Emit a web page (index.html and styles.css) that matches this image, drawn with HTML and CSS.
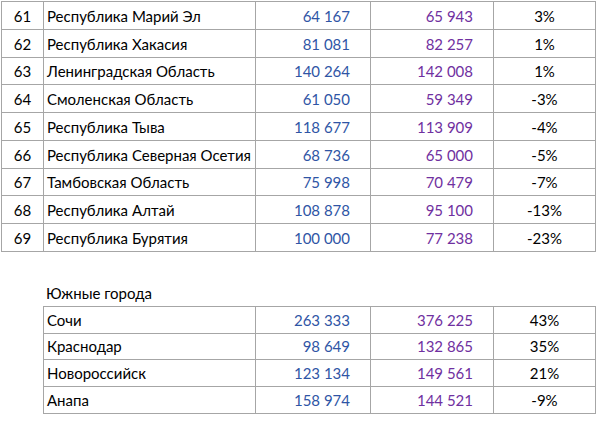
FILE: index.html
```html
<!DOCTYPE html>
<html lang="ru">
<head>
<meta charset="utf-8">
<link rel="stylesheet" href="styles.css">
</head>
<body>
<div class="sheet main">
  <div class="row"><div class="c num">61</div><div class="c name">Республика Марий Эл</div><div class="c v1">64 167</div><div class="c v2">65 943</div><div class="c pct">3%</div></div>
  <div class="row"><div class="c num">62</div><div class="c name">Республика Хакасия</div><div class="c v1">81 081</div><div class="c v2">82 257</div><div class="c pct">1%</div></div>
  <div class="row"><div class="c num">63</div><div class="c name">Ленинградская Область</div><div class="c v1">140 264</div><div class="c v2">142 008</div><div class="c pct">1%</div></div>
  <div class="row"><div class="c num">64</div><div class="c name">Смоленская Область</div><div class="c v1">61 050</div><div class="c v2">59 349</div><div class="c pct">-3%</div></div>
  <div class="row"><div class="c num">65</div><div class="c name">Республика Тыва</div><div class="c v1">118 677</div><div class="c v2">113 909</div><div class="c pct">-4%</div></div>
  <div class="row"><div class="c num">66</div><div class="c name">Республика Северная Осетия</div><div class="c v1">68 736</div><div class="c v2">65 000</div><div class="c pct">-5%</div></div>
  <div class="row"><div class="c num">67</div><div class="c name">Тамбовская Область</div><div class="c v1">75 998</div><div class="c v2">70 479</div><div class="c pct">-7%</div></div>
  <div class="row"><div class="c num">68</div><div class="c name">Республика Алтай</div><div class="c v1">108 878</div><div class="c v2">95 100</div><div class="c pct">-13%</div></div>
  <div class="row"><div class="c num">69</div><div class="c name">Республика Бурятия</div><div class="c v1">100 000</div><div class="c v2">77 238</div><div class="c pct">-23%</div></div>
</div>
<div class="caption">Южные города</div>
<div class="sheet south">
  <div class="row"><div class="c name">Сочи</div><div class="c v1">263 333</div><div class="c v2">376 225</div><div class="c pct">43%</div></div>
  <div class="row"><div class="c name">Краснодар</div><div class="c v1">98 649</div><div class="c v2">132 865</div><div class="c pct">35%</div></div>
  <div class="row"><div class="c name">Новороссийск</div><div class="c v1">123 134</div><div class="c v2">149 561</div><div class="c pct">21%</div></div>
  <div class="row"><div class="c name">Анапа</div><div class="c v1">158 974</div><div class="c v2">144 521</div><div class="c pct">-9%</div></div>
</div>
</body>
</html>
```
FILE: styles.css
```css
html, body {
  margin: 0;
  padding: 0;
  background: #ffffff;
}
body {
  padding: 1px 0 0 1px;
  font-family: Lato, "Open Sans", sans-serif;
  font-size: 15px;
  color: #000000;
}
.sheet {
  display: grid;
  border-top: 1px solid #a6a6a6;
  border-left: 1px solid #a6a6a6;
  width: max-content;
}
.main {
  grid-template-columns: 42px 212px 115px 123px 102px;
}
.south {
  grid-template-columns: 212px 115px 123px 102px;
  margin-left: 42px;
}
.row {
  display: contents;
}
.main .c {
  height: 27.78px;
}
.south .c {
  height: 26.75px;
}
.c {
  box-sizing: border-box;
  border-right: 1px solid #a6a6a6;
  border-bottom: 1px solid #a6a6a6;
  display: flex;
  align-items: flex-end;
  line-height: 18px;
  padding-bottom: 4px;
  white-space: nowrap;
}
.num { justify-content: center; }
.name { padding-left: 3px; }
.v1 { justify-content: flex-end; padding-right: 20px; color: #2f55a5; }
.v2 { justify-content: flex-end; padding-right: 20px; color: #7030a0; }
.pct { justify-content: center; }
.caption {
  margin-left: 45px;
  height: 54px;
  display: flex;
  align-items: flex-end;
  line-height: 18px;
  padding-bottom: 4px;
  box-sizing: border-box;
}
```
